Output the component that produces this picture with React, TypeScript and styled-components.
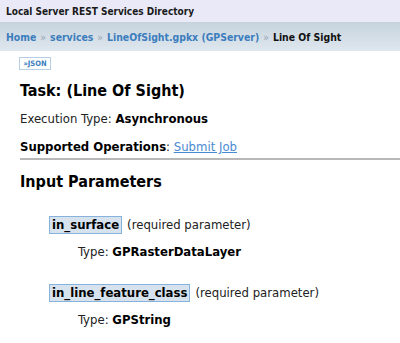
import React from "react";
import styled, { createGlobalStyle } from "styled-components";

const Global = createGlobalStyle`
  html, body { margin: 0; padding: 0; background: #fff; }
  body { font-family: "DejaVu Sans Condensed", "DejaVu Sans", Verdana, sans-serif; font-stretch: condensed; color: #000; }
`;

const Page = styled.div`
  width: 400px;
  height: 343px;
  overflow: hidden;
  display: flex;
  flex-direction: column;
`;

const TitleBar = styled.div`
  height: 22px;
  background: #e9e9f7;
  display: flex;
  align-items: center;
  padding-left: 6px;
  font-size: 10px;
  font-weight: bold;
  color: #1a1a1a;
`;

const Breadcrumbs = styled.div`
  height: 29px;
  background: linear-gradient(#c6d3dd, #dfe7ee);
  display: flex;
  align-items: center;
  padding-left: 6px;
  font-size: 10.4px;
  font-weight: bold;
  white-space: nowrap;
`;

const Crumb = styled.a`
  color: #3b7dbd;
  text-decoration: none;
`;

const Sep = styled.span`
  color: #95a5b3;
  margin: 0 4px;
  font-weight: normal;
`;

const Current = styled.span`
  color: #111;
`;

const Content = styled.div`
  padding: 6px 0 0 20px;
  display: flex;
  flex-direction: column;
`;

const JsonButton = styled.a`
  align-self: flex-start;
  margin-left: -1px;
  width: 32px;
  height: 13px;
  box-sizing: border-box;
  border: 1px solid #b6cfe6;
  display: flex;
  align-items: center;
  justify-content: center;
  font-size: 7.5px;
  font-weight: bold;
  color: #3b7dbd;
  text-decoration: none;
`;

const Heading = styled.h2<{ $top: number }>`
  margin: ${(p) => p.$top}px 0 0;
  font-size: 16px;
  line-height: 20px;
  font-weight: bold;
`;

const Line = styled.div<{ $top: number }>`
  font-size: 13px;
  line-height: 16px;
  margin-top: ${(p) => p.$top}px;
  white-space: nowrap;
  color: #222;
`;

const Strong = styled.b`
  font-weight: bold;
  color: #000;
`;

const JobLink = styled.a`
  color: #4a8ad2;
  text-decoration: underline;
`;

const Rule = styled.hr`
  margin: 3px 0 0;
  border: 0;
  border-top: 2px solid #b8b8b8;
  height: 0;
`;

const ParamList = styled.div`
  display: flex;
  flex-direction: column;
  padding-left: 29px;
`;

const ParamRow = styled.div`
  font-size: 13px;
  line-height: 18px;
  display: flex;
  align-items: center;
  gap: 5px;
  margin-top: 24px;
  white-space: nowrap;
`;

const ParamName = styled.span`
  background: #d6e3ee;
  border: 1px solid #86b2dc;
  font-weight: bold;
  padding: 0 2px;
  line-height: 16px;
`;

const Note = styled.span`
  color: #222;
`;

const TypeRow = styled.div`
  font-size: 13px;
  line-height: 16px;
  padding-left: 29px;
  margin-top: 10px;
  color: #222;
`;

const params = [
  { name: "in_surface", type: "GPRasterDataLayer" },
  { name: "in_line_feature_class", type: "GPString" },
];

export default function App() {
  return (
    <Page>
      <Global />
      <TitleBar>Local Server REST Services Directory</TitleBar>
      <Breadcrumbs>
        <Crumb href="#">Home</Crumb>
        <Sep>»</Sep>
        <Crumb href="#">services</Crumb>
        <Sep>»</Sep>
        <Crumb href="#">LineOfSight.gpkx (GPServer)</Crumb>
        <Sep>»</Sep>
        <Current>Line Of Sight</Current>
      </Breadcrumbs>
      <Content>
        <JsonButton href="#">»JSON</JsonButton>
        <Heading $top={11}>Task: (Line Of Sight)</Heading>
        <Line $top={10}>
          Execution Type: <Strong>Asynchronous</Strong>
        </Line>
        <Line $top={12}>
          <Strong>Supported Operations</Strong>: <JobLink href="#">Submit Job</JobLink>
        </Line>
        <Rule />
        <Heading $top={12}>Input Parameters</Heading>
        <ParamList>
          {params.map((p) => (
            <React.Fragment key={p.name}>
              <ParamRow>
                <ParamName>{p.name}</ParamName>
                <Note>(required parameter)</Note>
              </ParamRow>
              <TypeRow>
                Type: <Strong>{p.type}</Strong>
              </TypeRow>
            </React.Fragment>
          ))}
        </ParamList>
      </Content>
    </Page>
  );
}
